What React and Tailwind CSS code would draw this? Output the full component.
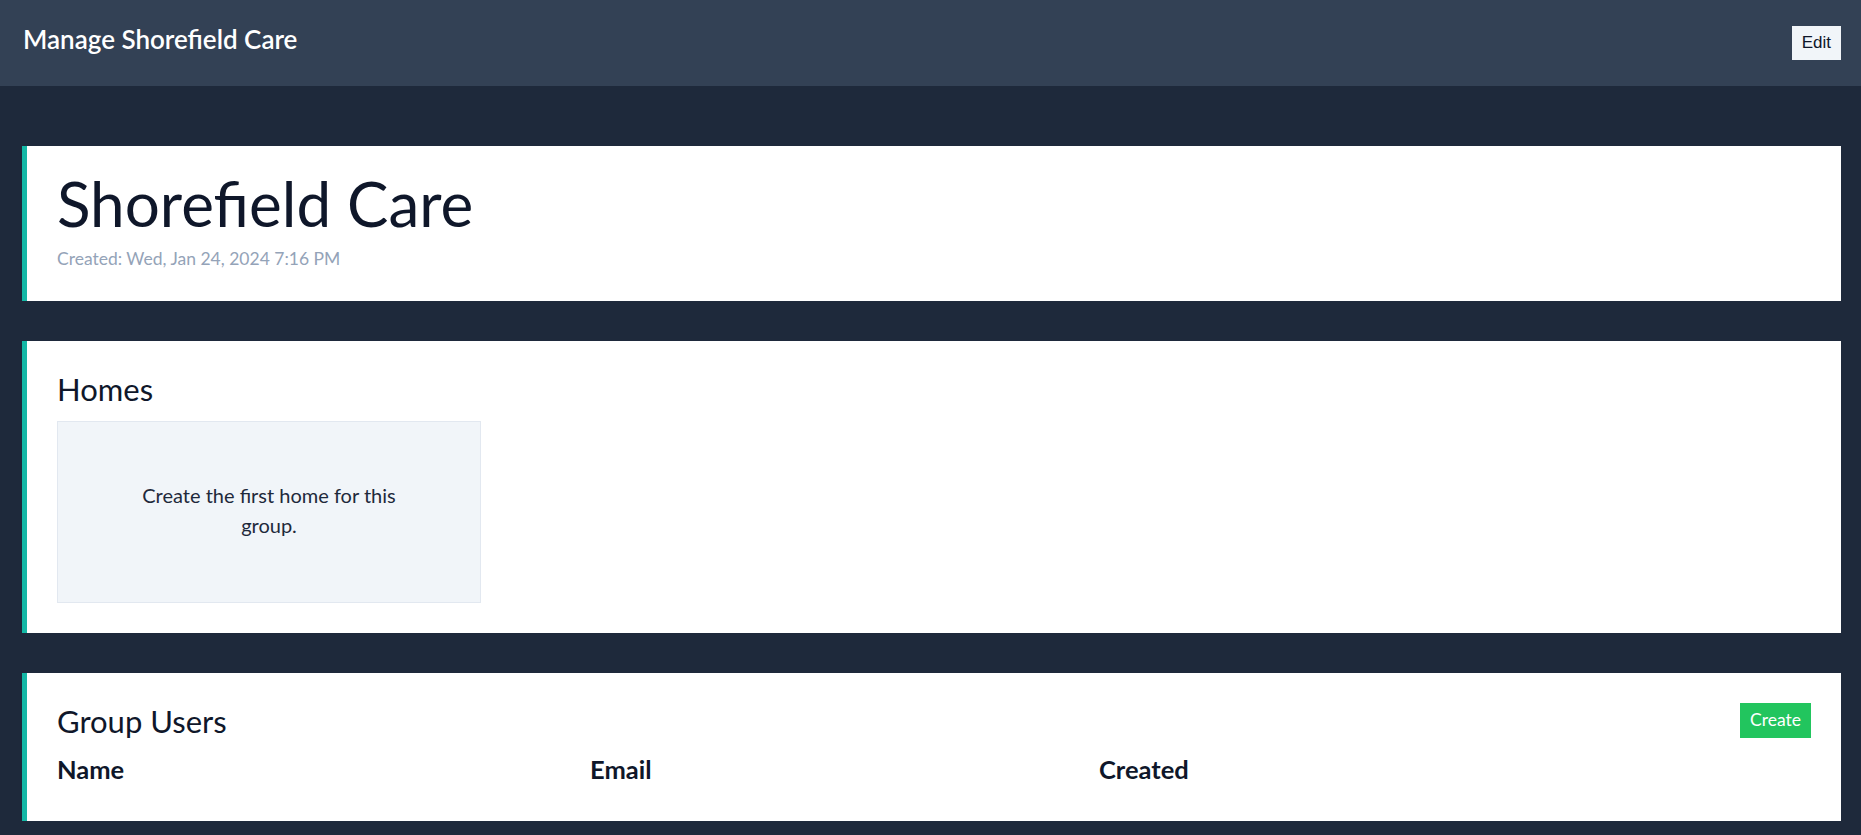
import React from 'react';

const sans = "font-['Lato','Noto_Sans',sans-serif]";

function Card({ children, className = '' }) {
  return (
    <section className={`bg-white border-l-[5px] border-[#14b8a6] p-[30px] ${className}`}>
      {children}
    </section>
  );
}

export default function App() {
  return (
    <div className={`min-h-screen bg-[#1e293b] ${sans}`}>
      {/* Top bar */}
      <header className="h-[86px] bg-[#334155] flex items-center justify-between pl-[23px] pr-5">
        <h1 className="mb-[7px] text-[26px] font-semibold text-white">Manage Shorefield Care</h1>
        <button className="h-[34px] px-[10px] bg-[#f1f5f9] text-[#0f172a] text-[17px] font-['Liberation_Sans',Arial,sans-serif]">
          Edit
        </button>
      </header>

      <main className="pl-[22px] pr-5 pt-[60px] pb-10 flex flex-col gap-10">
        {/* Group summary */}
        <Card>
          <h2 className="-mt-[4px] text-[62px] leading-none text-[#0f172a]">Shorefield Care</h2>
          <p className="mt-[13px] text-[17.5px] leading-6 text-[#94a3b8]">Created: Wed, Jan 24, 2024 7:16 PM</p>
        </Card>

        {/* Homes */}
        <Card>
          <h2 className="text-[31px] leading-9 text-[#0f172a]">Homes</h2>
          <div className="mt-[14px] w-[424px] h-[182px] flex items-center justify-center bg-[#f1f5f9] border border-[#e2e8f0] px-[70px] pb-[5px] text-center text-[20px] leading-[30px] text-[#1e293b]">
            Create the first home for this group.
          </div>
        </Card>

        {/* Group users */}
        <Card className="pb-[36px]">
          <div className="flex items-center justify-between h-[35px]">
            <h2 className="text-[31px] leading-9 text-[#0f172a]">Group Users</h2>
            <button className="h-[35px] px-[10px] bg-[#22c55e] text-white text-[17.5px]">Create</button>
          </div>
          <div className="mt-[15px] flex text-[25.5px] leading-8 font-bold text-[#0f172a]">
            <div className="w-[533px]">Name</div>
            <div className="w-[509px]">Email</div>
            <div>Created</div>
          </div>
        </Card>
      </main>
    </div>
  );
}
